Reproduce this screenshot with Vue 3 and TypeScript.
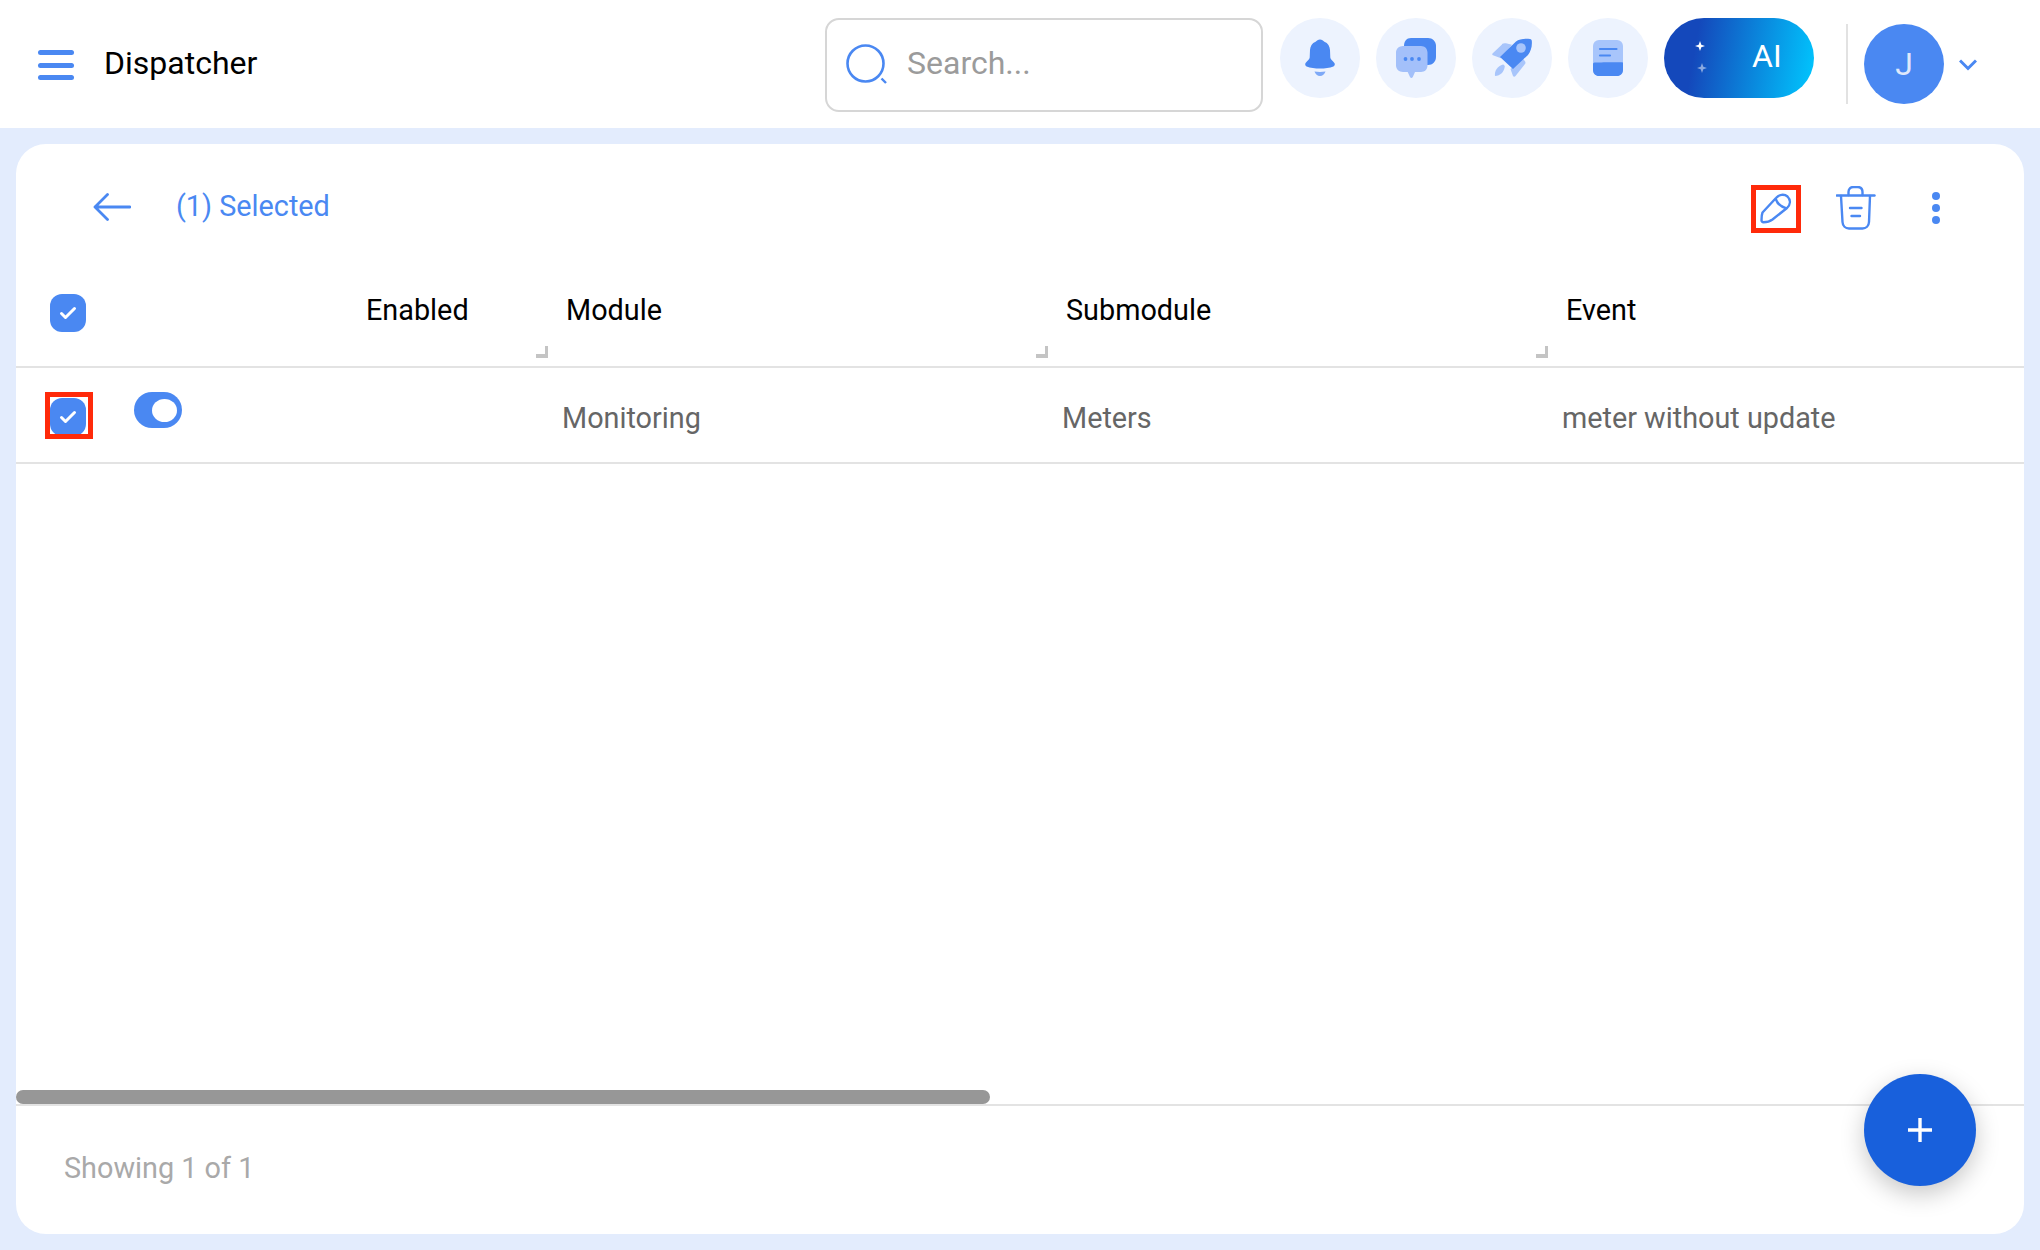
<template>
  <div class="page">
    <header class="topbar">
      <button class="menu-btn" aria-label="Menu">
        <span></span>
        <span></span>
        <span></span>
      </button>
      <h1 class="title">Dispatcher</h1>

      <div class="search">
        <svg class="search-icon" width="42" height="42" viewBox="0 0 42 42" fill="none">
          <circle cx="19.5" cy="19.5" r="18" stroke="#4a88f2" stroke-width="2.6" />
          <path d="M35.5 34.5l4.500 4.500" stroke="#4a88f2" stroke-width="2.400" />
        </svg>
        <span class="placeholder">Search...</span>
      </div>

      <div class="round-btn">
        <svg width="30" height="38" viewBox="0 0 30 38">
          <path fill="#4a88f2" d="M15 0.5c2 0 3.2 1.6 4.4 2.2 3.6 1.4 5.4 4.6 5.6 8.4l0.3 7.4c0.1 2 2.2 3.2 3.9 5.2 1 1.2 0.8 3-0.8 3.7-3.6 1.5-8.6 2.1-13.4 2.1s-9.800-0.600-13.400-2.100c-1.600-0.700-1.800-2.500-0.800-3.700 1.700-2 3.800-3.200 3.900-5.200l0.300-7.400c0.200-3.800 2-7 5.600-8.400 1.200-0.600 2.400-2.200 4.400-2.200z" />
          <path fill="#7ea9f7" d="M9.500 32.500c3.600 0.500 7.400 0.500 11 0-0.800 2.600-3 4.500-5.500 4.500s-4.700-1.900-5.500-4.500z" />
        </svg>
      </div>
      <div class="round-btn">
        <svg width="40" height="41" viewBox="0 0 40 41">
          <path fill="#4a88f2" d="M15 0h17c4.500 0 8 3.500 8 8v11c0 4.500-3.500 8-8 8H15c-4.500 0-7-3.500-7-8V8c0-4.500 2.500-8 7-8z" />
          <path fill="#a3c0fa" d="M7 8h18c3.800 0 6.500 2.800 6.500 6.500v13c0 3.700-2.700 6.500-6.500 6.500h-6l-2.200 5c-0.800 1.200-2 1.200-2.800 0l-2.300-5H7c-3.800 0-7-2.800-7-6.500v-13C0 10.800 3.200 8 7 8z" />
          <circle cx="9.500" cy="21" r="1.900" fill="#4a88f2" />
          <circle cx="16" cy="21" r="1.900" fill="#4a88f2" />
          <circle cx="23" cy="21" r="1.900" fill="#4a88f2" />
        </svg>
      </div>
      <div class="round-btn">
        <svg width="40" height="40" viewBox="0 0 40 40">
          <path fill="#a8c5fb" d="M10 6.500L0.500 15.500c-0.500 0.700-0.300 1.500 0.500 1.800l8 3 11-13.500-6-1.500c-1.500-0.300-2.900-0.100-4 0.700z" />
          <path fill="#a8c5fb" d="M33 26l-9.500 12c-0.800 1-2.100 0.800-2.600-0.300L18.500 31l12-11 2.600 3.500c0.500 0.700 0.500 1.700-0.100 2.500z" />
          <path fill="#a8c5fb" d="M3 38c-0.800-5 2.500-10 8-11.500 1 0.300 1.500 1 1.800 1.800-0.500 5.500-4.500 9.700-9.800 9.700z" />
          <path fill="#4a88f2" d="M8 19L24 3.500C27 1 33 0.200 38 1c1.300 0.300 1.700 0.800 1.800 2 0.500 5.500-1 10.500-3.800 14L21 31z" />
          <circle cx="29" cy="10" r="4.800" fill="#a8c5fb" />
        </svg>
      </div>
      <div class="round-btn">
        <svg width="30" height="36" viewBox="0 0 30 36">
          <rect width="30" height="36" rx="6" fill="#a8c5fb" />
          <path fill="#4a88f2" d="M0 30v-6c0-1.500 1-1.500 3-1.500 4 0 22-0.500 27 0V30c0 3.500-2.500 6-6 6H6c-3.500 0-6-2.500-6-6z" />
          <path d="M7 9h16.500M7 15.500h10" stroke="#4a88f2" stroke-width="2.200" fill="none" stroke-linecap="round" />
        </svg>
      </div>

      <div class="ai-btn">
        <span class="sparkles">
          <svg width="10" height="10" viewBox="0 0 10 10"><path fill="#fff" d="M5 0l1.300 3.700L10 5 6.300 6.300 5 10 3.700 6.300 0 5l3.700-1.300z" /></svg>
          <svg class="faded" width="10" height="10" viewBox="0 0 10 10"><path fill="#fff" d="M5 0l1.300 3.700L10 5 6.300 6.300 5 10 3.700 6.300 0 5l3.700-1.300z" /></svg>
        </span>
        <span class="ai-label">AI</span>
      </div>

      <span class="divider"></span>
      <div class="avatar">J</div>
      <svg class="chevron" width="18" height="12" viewBox="0 0 18 12" fill="none">
        <path d="M1 1.500l8 8 8-8" stroke="#4a88f2" stroke-width="3" />
      </svg>
    </header>

    <main class="content">
      <section class="card">
        <div class="selection-bar">
          <svg class="back" width="38" height="28" viewBox="0 0 38 28" fill="none">
            <path d="M37 14H2M14.500 1.500L2 14l12.500 12.500" stroke="#4a88f2" stroke-width="2.800" stroke-linecap="round" stroke-linejoin="round" />
          </svg>
          <span class="selected-text">(1) Selected</span>

          <div class="actions">
            <button class="action highlighted" aria-label="Edit">
              <svg width="32" height="32" viewBox="0 0 32 32" fill="none" stroke="#4a88f2" stroke-width="2.400" stroke-linejoin="round">
                <path d="M2.500 20.500L16 6c3-3.500 8-4.500 11.500-1.500 3.500 3.500 3 8-0.500 11.500L12.500 27.500c-2 1.500-5.500 2.800-9 2.800-1.200 0-2-0.800-2-2 0-2.500 0.200-5.800 1-7.800z" />
                <path d="M15.500 6.500c1.500 4.500 5.500 8.500 11 9.800" />
              </svg>
            </button>
            <button class="action trash" aria-label="Delete">
              <svg width="40" height="44" viewBox="0 0 40 44" fill="none" stroke="#4a88f2" stroke-width="2.400" stroke-linecap="round">
                <path d="M0.800 9.500h37.700" />
                <path d="M12.500 9V6c0-3 2-5 5-5h4c3 0 5 2 5 5v3" />
                <path d="M5 10l1.500 26c0.200 4 3 6.500 6.500 6.500h13.500c3.500 0 6.300-2.500 6.500-6.500L34 10" />
                <path d="M14 22h11.500M15.500 30h8.500" />
              </svg>
            </button>
            <button class="action dots" aria-label="More">
              <span></span>
              <span></span>
              <span></span>
            </button>
          </div>
        </div>

        <div class="table-head grid">
          <div class="cell">
            <span class="checkbox">
              <svg width="18" height="14" viewBox="0 0 18 14" fill="none"><path d="M2.500 7.500l4 4L15.500 2.500" stroke="#fff" stroke-width="3" stroke-linecap="round" stroke-linejoin="round" /></svg>
            </span>
          </div>
          <div v-for="col in columns" :key="col" class="cell head-cell">
            {{ col }}
            <i v-if="col !== 'Event'" class="resize"></i>
          </div>
        </div>

        <div class="table-row grid">
          <div class="cell first-cell">
            <span class="mark">
              <span class="checkbox">
                <svg width="18" height="14" viewBox="0 0 18 14" fill="none"><path d="M2.500 7.500l4 4L15.500 2.500" stroke="#fff" stroke-width="3" stroke-linecap="round" stroke-linejoin="round" /></svg>
              </span>
            </span>
            <span class="toggle"><span class="knob"></span></span>
          </div>
          <div class="cell"></div>
          <div v-for="value in row" :key="value" class="cell row-cell">{{ value }}</div>
        </div>

        <div class="table-space"></div>

        <div class="scrollbar"><div class="thumb"></div></div>

        <footer class="card-footer">Showing 1 of 1</footer>

        <button class="fab" aria-label="Add">
          <svg width="24" height="24" viewBox="0 0 24 24"><path d="M12 0v24M0 12h24" stroke="#fff" stroke-width="3.400" /></svg>
        </button>
      </section>
    </main>
  </div>
</template>

<script setup lang="ts">
const columns: string[] = ["Enabled", "Module", "Submodule", "Event"];
const row: string[] = ["Monitoring", "Meters", "meter without update"];
</script>

<style>
html,
body {
  margin: 0;
  background: #e3ecfd;
}
</style>

<style scoped>
.page {
  width: 2040px;
  height: 1250px;
  display: flex;
  flex-direction: column;
  background: #e3ecfd;
  font-family: Roboto, "Liberation Sans", sans-serif;
  overflow: hidden;
}

/* top bar */
.topbar {
  height: 128px;
  flex: none;
  background: #fff;
  display: flex;
  align-items: flex-start;
  box-sizing: border-box;
  padding: 18px 0 0 38px;
}
.menu-btn {
  width: 36px;
  height: 30px;
  margin-top: 32px;
  padding: 0;
  border: 0;
  background: none;
  display: flex;
  flex-direction: column;
  justify-content: space-between;
}
.menu-btn span {
  display: block;
  height: 5px;
  border-radius: 3px;
  background: #4a88f2;
}
.title {
  margin: 26px 0 0 30px;
  width: 721px;
  font-size: 32px;
  line-height: 38px;
  font-weight: 400;
  color: #000;
}
.search {
  width: 438px;
  height: 94px;
  box-sizing: border-box;
  border: 2px solid #d6d6d6;
  border-radius: 14px;
  display: flex;
  align-items: center;
  padding-left: 19px;
  margin-right: 17px;
}
.search-icon {
  flex: none;
}
.placeholder {
  margin-left: 19px;
  margin-top: -4px;
  font-size: 32px;
  color: #9b9b9b;
}
.round-btn {
  width: 80px;
  height: 80px;
  flex: none;
  margin-right: 16px;
  border-radius: 50%;
  background: #edf3fe;
  display: flex;
  align-items: center;
  justify-content: center;
}
.ai-btn {
  width: 150px;
  height: 80px;
  flex: none;
  border-radius: 40px;
  background: linear-gradient(100deg, #1448bb 22%, #00c8ff 100%);
  display: flex;
  align-items: center;
  padding-left: 31px;
  box-sizing: border-box;
}
.sparkles {
  display: flex;
  flex-direction: column;
  gap: 12px;
  width: 57px;
  margin-top: -2px;
}
.sparkles svg {
  display: block;
}
.sparkles .faded {
  opacity: 0.5;
  margin-left: 2px;
}
.ai-label {
  font-size: 32px;
  color: #fff;
  margin-top: -5px;
}
.divider {
  width: 2px;
  height: 80px;
  margin: 6px 16px 0 32px;
  background: #e2e2e2;
}
.avatar {
  width: 80px;
  height: 80px;
  margin-top: 6px;
  border-radius: 50%;
  background: #4a88f2;
  color: #dfe8fb;
  font-size: 32px;
  display: flex;
  align-items: center;
  justify-content: center;
}
.chevron {
  margin: 41px 0 0 15px;
}

/* card */
.content {
  flex: 1;
  display: flex;
  padding: 16px;
  min-height: 0;
}
.card {
  flex: 1;
  position: relative;
  display: flex;
  flex-direction: column;
  background: #fff;
  border-radius: 30px;
  overflow: hidden;
}
.selection-bar {
  height: 126px;
  flex: none;
  display: flex;
  align-items: center;
  padding: 0 0 0 77px;
}
.back {
  flex: none;
  margin-top: -1px;
}
.selected-text {
  margin-left: 45px;
  margin-top: -2px;
  font-size: 28.8px;
  color: #4a88f2;
}
.actions {
  margin-left: auto;
  display: flex;
  align-items: center;
}
.action {
  padding: 0;
  border: 0;
  background: none;
  display: flex;
  align-items: center;
  justify-content: center;
}
.highlighted {
  width: 50px;
  height: 48px;
  box-sizing: border-box;
  border: 5px solid #ff2a0a;
  margin-top: 4px;
}
.highlighted svg {
  margin-top: -2px;
}
.trash {
  margin-left: 35px;
  margin-top: 2px;
}
.dots {
  width: 8px;
  flex-direction: column;
  gap: 4px;
  margin: 2px 84px 0 56px;
}
.dots span {
  width: 8px;
  height: 8px;
  border-radius: 50%;
  background: #4a88f2;
}

/* table */
.grid {
  display: grid;
  grid-template-columns: 332px 200px 500px 500px 1fr;
  flex: none;
}
.table-head {
  height: 98px;
  box-sizing: border-box;
  border-bottom: 2px solid #e3e3e3;
}
.table-row {
  height: 96px;
  box-sizing: border-box;
  border-bottom: 2px solid #e3e3e3;
}
.cell {
  position: relative;
  min-width: 0;
}
.table-head .cell:first-child {
  padding: 24px 0 0 34px;
}
.head-cell {
  padding: 24px 0 0 18px;
  font-size: 28.8px;
  line-height: 32px;
  color: #000;
}
.resize {
  position: absolute;
  right: 0;
  bottom: 8px;
  width: 12px;
  height: 12px;
  box-sizing: border-box;
  border-right: 3px solid #c4c4c4;
  border-bottom: 4px solid #c4c4c4;
}
.first-cell {
  display: flex;
  align-items: flex-start;
  padding: 24px 0 0 29px;
}
.mark {
  width: 48px;
  height: 47px;
  box-sizing: border-box;
  border: 5px solid #ff2a0a;
  padding-top: 1px;
  flex: none;
  display: block;
  overflow: hidden;
}
.checkbox {
  width: 36px;
  height: 38px;
  border-radius: 12px;
  background: #4a88f2;
  display: flex;
  align-items: center;
  justify-content: center;
}
.toggle {
  margin-left: 41px;
  width: 48px;
  height: 36px;
  border-radius: 18px;
  background: #4a88f2;
  display: flex;
  align-items: center;
  justify-content: flex-end;
  padding-right: 5px;
  box-sizing: border-box;
}
.knob {
  width: 25px;
  height: 23px;
  border-radius: 50%;
  background: #fff;
}
.row-cell {
  padding: 34px 0 0 14px;
  font-size: 28.8px;
  line-height: 32px;
  color: #666;
}
.table-space {
  flex: 1;
}
.scrollbar {
  height: 16px;
  flex: none;
  box-sizing: border-box;
  border-bottom: 2px solid #e3e3e3;
}
.thumb {
  width: 974px;
  height: 14px;
  border-radius: 7px;
  background: #979797;
}
.card-footer {
  height: 128px;
  flex: none;
  box-sizing: border-box;
  padding: 45px 0 0 48px;
  font-size: 28.8px;
  line-height: 34px;
  color: #a9a9a9;
}
.fab {
  position: absolute;
  right: 48px;
  bottom: 48px;
  width: 112px;
  height: 112px;
  padding: 0;
  border: 0;
  border-radius: 50%;
  background: #1860dc;
  box-shadow: 0 8px 24px rgba(0, 0, 0, 0.22);
  display: flex;
  align-items: center;
  justify-content: center;
}
</style>
